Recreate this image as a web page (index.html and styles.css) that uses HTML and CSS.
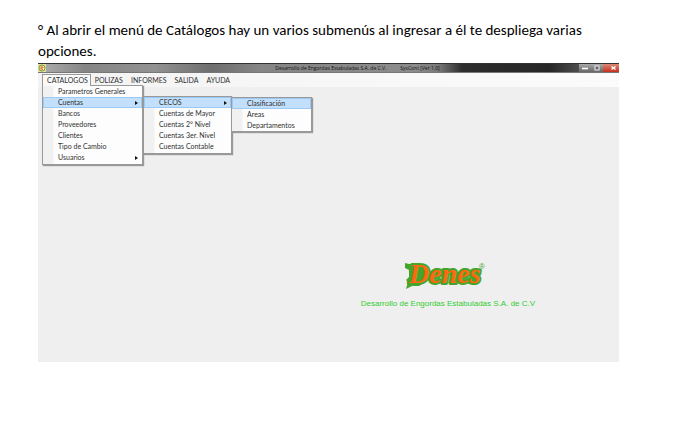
FILE: index.html
```html
<!DOCTYPE html>
<html lang="es">
<head>
<meta charset="utf-8">
<title>Menú de Catálogos</title>
<link rel="stylesheet" href="styles.css">
</head>
<body>
<main class="page">
  <p class="intro">° Al abrir el menú de Catálogos hay un varios submenús al ingresar a él te despliega varias opciones.</p>
  <section class="window">
    <header class="titlebar">
      <svg class="app-icon" viewBox="0 0 8 8" aria-hidden="true"><rect width="8" height="8" fill="#e8d9a0"/><circle cx="4" cy="4" r="3" fill="#fff4c8" stroke="#6aa53a"/><path d="M3 2v4M3 3h2v1H3l2 2" fill="none" stroke="#e5722a"/></svg>
      <div class="caption"><span>Desarrollo de Engordas Estabuladas S.A. de C.V.</span><span>SysCont [Ver 1.0]</span></div>
      <div class="controls">
        <button class="control" aria-label="Minimizar"><svg viewBox="0 0 12 8"><path d="M3 4.5h6" stroke="#fff" stroke-width="1.6"/></svg></button>
        <button class="control" aria-label="Restaurar"><svg viewBox="0 0 12 8"><rect x="4" y="2" width="4" height="4" fill="#666" stroke="#eee"/></svg></button>
        <button class="control close" aria-label="Cerrar"><svg viewBox="0 0 16 8"><path d="M8.500 2.500l4 3m0-3l-4 3" stroke="#fff" stroke-width="1.500"/></svg></button>
      </div>
    </header>
    <nav class="menubar">
      <div class="entry">
        <button class="top open">CATALOGOS</button>
        <ul class="menu catalogs">
          <li><button class="item">Parametros Generales</button></li>
          <li class="entry"><button class="item parent active">Cuentas</button>
            <ul class="menu accounts">
              <li class="entry"><button class="item parent active">CECOS</button>
                <ul class="menu cecos">
                  <li><button class="item active">Clasificación</button></li>
                  <li><button class="item">Areas</button></li>
                  <li><button class="item">Departamentos</button></li>
                </ul>
              </li>
              <li><button class="item">Cuentas de Mayor</button></li>
              <li><button class="item">Cuentas 2° Nivel</button></li>
              <li><button class="item">Cuentas 3er. Nivel</button></li>
              <li><button class="item">Cuentas Contable</button></li>
            </ul>
          </li>
          <li><button class="item">Bancos</button></li>
          <li><button class="item">Proveedores</button></li>
          <li><button class="item">Clientes</button></li>
          <li><button class="item">Tipo de Cambio</button></li>
          <li><button class="item parent">Usuarios</button></li>
        </ul>
      </div>
      <button class="top">POLIZAS</button>
      <button class="top">INFORMES</button>
      <button class="top">SALIDA</button>
      <button class="top">AYUDA</button>
    </nav>
    <div class="workspace">
      <div class="brand">
        <svg class="logo" viewBox="0 0 86 32" role="img" aria-label="Denes">
          <path d="M1 3l4 1h14l7 6-3 11-8 5-7 0-6 3 2-7-2-2 3-3V10L1 8z" fill="#45a52b"/>
          <text class="logo-word" x="5" y="23">Denes</text>
          <text class="logo-mark" x="75" y="9">®</text>
        </svg>
        <p class="company">Desarrollo de Engordas Estabuladas S.A. de C.V</p>
      </div>
    </div>
  </section>
</main>
</body>
</html>
```
FILE: styles.css
```css
* { box-sizing: border-box; }
body { margin: 0; background: #fff; }
button { border: 0; padding: 0; background: none; color: inherit; font: inherit; }
ul { margin: 0; padding: 0; list-style: none; }

.page { padding: 20px 58px 76px 38px; }
.intro {
  margin: 0 0 1px;
  color: #000;
  font: 15px/21px Carlito, Lato, sans-serif;
}

.window {
  background: #efefef;
  color: #303030;
  font: 7px/11px Lato, sans-serif;
}
.titlebar {
  display: flex;
  align-items: center;
  height: 10px;
  border-top: 1px solid #333;
  border-bottom: 1px solid #777;
  background: linear-gradient(90deg, #b0b0b0 0%, #858585 8%, #929292 20%, #6e6e6e 30%, #858585 38%, #8c8c8c 65%, #777 69%, #2d2d2d 73%, #262626 88%, #555 94%);
}
.app-icon { width: 8px; height: 8px; }
.caption {
  flex: 1;
  display: flex;
  justify-content: center;
  gap: 14px;
  padding-left: 90px;
  color: #111;
  font: 5px/8px "Open Sans", sans-serif;
}
.controls { display: flex; }
.control { width: 12px; height: 8px; background: linear-gradient(#aaa, #666); }
.control svg { display: block; width: 100%; height: 8px; }
.close { width: 16px; background: linear-gradient(#d98a78, #c8301c); }

.menubar {
  display: flex;
  height: 14px;
  padding: 1px 0 0 4px;
  background: linear-gradient(90deg, #f3f3f3, #fbfbfb);
}
.entry { position: relative; }
.top { height: 12px; padding: 0 4px; line-height: 12px; white-space: nowrap; }
.open {
  position: relative;
  z-index: 2;
  border: 1px solid #999;
  border-bottom: 0;
  padding: 0 2px 0 4px;
  background: #fafafa;
  line-height: 11px;
}

.menu {
  position: absolute;
  z-index: 1;
  border: 1px solid #999;
  background: linear-gradient(90deg, #f1f1f1 10px, #fdfdfd 11px);
  box-shadow: 1px 1px 1px #999;
}
.catalogs { top: 11px; left: 0; width: 101px; padding-bottom: 1px; }
.accounts { top: -1px; left: 100px; width: 89px; padding-bottom: 1px; }
.cecos { top: 0; left: 87px; width: 81px; }
.item {
  position: relative;
  display: block;
  width: 100%;
  height: 11px;
  padding-left: 15px;
  text-align: left;
  white-space: nowrap;
}
.active { background: #c2e0fb; box-shadow: inset 0 0 0 1px #9bcaf5; }
.parent::after {
  content: "";
  position: absolute;
  top: 4px;
  right: 4px;
  border: 2px solid transparent;
  border-left: 3px solid #111;
  border-right: 0;
}

.workspace {
  display: grid;
  grid-template-columns: 5fr 4fr;
  padding: 173px 0 53px;
}
.brand { grid-column: 2; width: max-content; }
.logo { display: block; overflow: visible; width: 86px; height: 32px; margin: 0 auto 6px 43px; }
.logo-word {
  fill: #ff6810;
  stroke: #45a52b;
  stroke-width: 4px;
  stroke-linejoin: round;
  paint-order: stroke;
  font: italic bold 28px "Liberation Serif", serif;
}
.logo-mark { fill: #45a52b; font: 8px "Liberation Sans", sans-serif; }
.company {
  margin: 0;
  color: #32cd32;
  font: 8px/11px "Liberation Sans", Arial, sans-serif;
}
```
